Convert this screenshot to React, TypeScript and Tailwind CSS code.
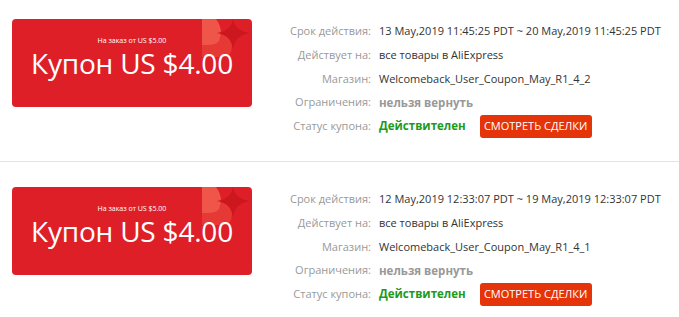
import React from "react";

type Coupon = {
  period: string;
  store: string;
};

const coupons: Coupon[] = [
  {
    period: "13 May,2019 11:45:25 PDT ~ 20 May,2019 11:45:25 PDT",
    store: "Welcomeback_User_Coupon_May_R1_4_2",
  },
  {
    period: "12 May,2019 12:33:07 PDT ~ 19 May,2019 12:33:07 PDT",
    store: "Welcomeback_User_Coupon_May_R1_4_1",
  },
];

function Decoration() {
  return (
    <svg
      className="absolute right-0 top-0"
      width="50"
      height="40"
      viewBox="0 0 50 40"
    >
      <path d="M0 16 H20 Q30 16 30 28 Q30 38 20 38 H0 Z" fill="#e63834" />
      <path d="M0 0 H14 Q22 10 17 22 Q14 26 6 26 H0 Z" fill="#ef5549" />
      <path
        d="M31 0 Q33 12 48 14 Q33 16 31 30 Q29 16 15 14 Q29 12 31 0 Z"
        fill="#cc171e"
      />
    </svg>
  );
}

function CouponCard() {
  return (
    <div className="relative ml-[12px] flex h-[88px] w-[240px] shrink-0 flex-col items-center overflow-hidden rounded-[4px] bg-[#df1f27] pt-[16px]">
      <Decoration />
      <div className="relative h-[12px] whitespace-nowrap text-[7px] leading-[12px] text-white">
        На заказ от US $5.00
      </div>
      <div className="relative whitespace-nowrap text-[28px] leading-[32px] tracking-[-0.2px] text-white">
        Купон US $4.00
      </div>
    </div>
  );
}

function Row({
  label,
  h,
  children,
}: {
  label: string;
  h: string;
  children: React.ReactNode;
}) {
  return (
    <div className={`flex items-center whitespace-nowrap ${h}`}>
      <div className="w-[91px] shrink-0 text-right text-[#999]">{label}</div>
      <div className="ml-[8px] flex items-center text-[#333]">{children}</div>
    </div>
  );
}

function Section({ c, first }: { c: Coupon; first: boolean }) {
  return (
    <div
      className={
        first
          ? "flex border-b border-[#e3e3e3] pb-[23px] pt-[19px]"
          : "flex pt-[25px]"
      }
    >
      <CouponCard />
      <div className="ml-[28px] mt-[1px] flex flex-col text-[11px]">
        <Row label="Срок действия:" h="h-[23px]">
          {c.period}
        </Row>
        <Row label="Действует на:" h="h-[24px]">
          все товары в AliExpress
        </Row>
        <Row label="Магазин:" h="h-[24px]">
          {c.store}
        </Row>
        <Row label="Ограничения:" h="h-[23px]">
          <span className="text-[11.5px] font-bold text-[#999]">
            нельзя вернуть
          </span>
        </Row>
        <Row label="Статус купона:" h="h-[24px]">
          <span className="text-[11.5px] font-bold text-[#1c9a1c]">
            Действителен
          </span>
          <button className="ml-[14px] flex h-[23px] w-[112px] items-center justify-center whitespace-nowrap rounded-[3px] bg-[#e5330a] text-[11px] text-white">
            СМОТРЕТЬ СДЕЛКИ
          </button>
        </Row>
      </div>
    </div>
  );
}

export default function App() {
  return (
    <div
      className="h-[317px] w-[679px] overflow-hidden bg-white"
      style={{ fontFamily: '"Open Sans", "Noto Sans", sans-serif' }}
    >
      {coupons.map((c, i) => (
        <Section key={i} c={c} first={i === 0} />
      ))}
    </div>
  );
}
